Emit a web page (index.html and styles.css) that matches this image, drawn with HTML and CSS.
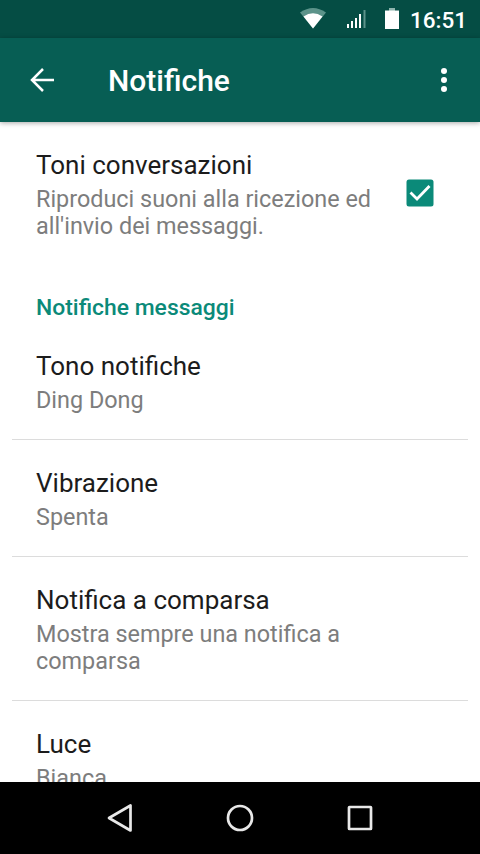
FILE: index.html
```html
<!DOCTYPE html>
<html lang="it">
<head>
<meta charset="utf-8">
<title>Notifiche</title>
<link rel="stylesheet" href="styles.css">
</head>
<body>
<div class="screen">
  <div class="status">
    <svg class="wifi" width="26" height="22" viewBox="0 0 26 22"><path d="M0 4.500Q13-4.500 26 4.500L13 20.500Z" fill="#5c938a"/><path d="M3.500 8.500Q13 2 22.500 8.500L13 20.500Z" fill="#fff"/></svg>
    <svg class="signal" width="19" height="19" viewBox="0 0 19 19"><path d="M0 14h2v4H0zM4 11h2v7H4zM8 8h2v10H8zM12 4h2v14h-2z" fill="#fff"/><path d="M16.500 0h2v18h-2z" fill="#5c938a"/></svg>
    <svg class="battery" width="14" height="22" viewBox="0 0 14 22"><path d="M4 0h6v3H4z" fill="#8fb5ae"/><path d="M0 2.500h14V21H0z" fill="#fff"/></svg>
    <span class="time">16:51</span>
  </div>
  <header class="bar">
    <svg class="back" width="24" height="24" viewBox="0 0 24 24" fill="none" stroke="#fff" stroke-width="2.500"><path d="M24 12H2M13 1L2 12l11 11"/></svg>
    <h1>Notifiche</h1>
    <svg class="more" width="6" height="24" viewBox="0 0 6 24" fill="#fff"><circle cx="3" cy="3" r="3"/><circle cx="3" cy="12" r="3"/><circle cx="3" cy="21" r="3"/></svg>
  </header>
  <main class="list">
    <div class="row check">
      <div><div class="title">Toni conversazioni</div><div class="sub">Riproduci suoni alla ricezione ed<br>all'invio dei messaggi.</div></div>
      <svg class="box" width="28" height="28" viewBox="0 0 28 28"><rect x=".5" y=".5" width="27" height="27" rx="2.500" fill="#0b8a79"/><path d="M4.500 13.500l6.500 6.500L23.500 7" fill="none" stroke="#fff" stroke-width="2.800"/></svg>
    </div>
    <h2>Notifiche messaggi</h2>
    <div class="row"><div class="title">Tono notifiche</div><div class="sub">Ding Dong</div></div>
    <hr>
    <div class="row"><div class="title">Vibrazione</div><div class="sub">Spenta</div></div>
    <hr>
    <div class="row"><div class="title">Notifica a comparsa</div><div class="sub">Mostra sempre una notifica a<br>comparsa</div></div>
    <hr>
    <div class="row"><div class="title">Luce</div><div class="sub">Bianca</div></div>
  </main>
  <nav class="nav">
    <svg width="28" height="30" viewBox="0 0 28 30"><path d="M3 15L24.500 2.500v25z"/></svg>
    <svg width="28" height="30" viewBox="0 0 28 30"><circle cx="14" cy="15" r="12"/></svg>
    <svg width="28" height="30" viewBox="0 0 28 30"><rect x="3" y="4" width="22" height="22" rx=".5"/></svg>
  </nav>
</div>
</body>
</html>
```
FILE: styles.css
```css
body { margin: 0; font-family: Roboto, sans-serif; background: #fff; }
.screen { width: 480px; height: 854px; display: flex; flex-direction: column; overflow: hidden; }
.status { height: 38px; flex: none; box-sizing: border-box; padding-right: 13px; background: #054d44; display: flex; align-items: center; justify-content: flex-end; color: #fff; }
.signal { margin-left: 21px; }
.battery { margin-left: 19px; }
.time { margin-left: 11px; padding-top: 2px; font-size: 22.5px; font-weight: 500; line-height: 36px; }
.bar { height: 84px; flex: none; box-sizing: border-box; padding: 0 33px 0 30px; background: #075e54; display: flex; align-items: center; color: #fff; box-shadow: 0 1px 5px rgba(0,0,0,.35); z-index: 1; }
h1 { margin: 0 auto 0 54px; padding-top: 2px; font-size: 30px; font-weight: 500; line-height: 36px; }
.list { flex: 1; min-height: 0; overflow: hidden; }
.row { padding: 28px 36px 25px; }
.check { display: flex; justify-content: space-between; align-items: center; padding-right: 46px; }
.box { margin-bottom: 5px; }
.title { margin-bottom: 5px; font-size: 26px; line-height: 31px; color: #1c1c1c; white-space: nowrap; }
.check .box { margin: -5px 0 0; }
.sub { font-size: 23.4px; line-height: 27px; color: #7d7d7d; white-space: nowrap; }
h2 { margin: 0; padding: 29px 36px 2px; font-size: 22.9px; line-height: 27px; font-weight: 500; color: #0b8a79; }
hr { margin: 0 12px; height: 1px; border: 0; background: #dcdcdc; }
.nav { height: 72px; flex: none; background: #000; display: flex; justify-content: center; align-items: center; gap: 92px; }
.nav svg { fill: none; stroke: #e8e8e8; stroke-width: 2.700; stroke-linejoin: round; }
```
